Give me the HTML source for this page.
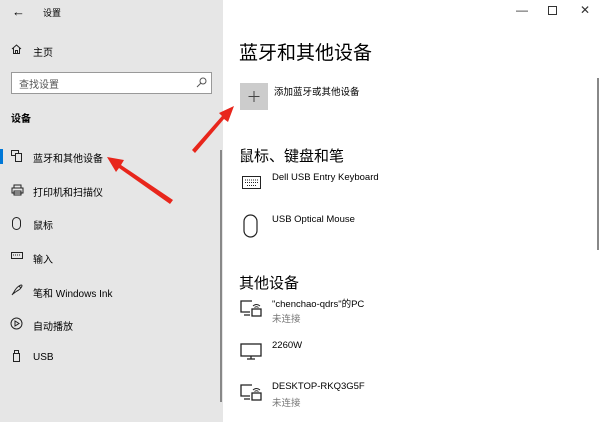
<!DOCTYPE html><html><head><meta charset="utf-8"><style>
*{margin:0;padding:0;box-sizing:border-box}
body{width:600px;height:422px;overflow:hidden;background:#fff;font-family:"Liberation Sans","Noto Sans CJK SC",sans-serif;color:#000;position:relative}
.side{position:absolute;left:0;top:0;width:223px;height:422px;background:#e6e6e6}
.t{position:absolute;white-space:nowrap;font-size:10px}
svg{position:absolute}
.g{color:#777}
</style></head><body>
<div class="side">
<div class="t" style="left:12px;top:4px;font-size:13px">←</div>
<div class="t" style="left:43px;top:6px;font-size:9px">设置</div>
<svg style="left:11px;top:44px" width="11" height="10" viewBox="0 0 11 10"><path d="M1 5L5.5 1L10 5M2.5 4V9.5H8.5V4M4.5 9.5V6.5H6.5V9.5" fill="none" stroke="#222" stroke-width="1"/></svg>
<div class="t" style="left:33px;top:44px">主页</div>
<div style="position:absolute;left:11px;top:72px;width:201px;height:22px;border:1px solid #999;background:#fff"></div>
<div class="t" style="left:19px;top:76px;color:#555">查找设置</div>
<svg style="left:196px;top:77px" width="11" height="11"><circle cx="7" cy="4" r="3" fill="none" stroke="#555"/><path d="M5 6L1 10" stroke="#555"/></svg>
<div class="t" style="left:11px;top:110px;font-weight:bold">设备</div>
<div style="position:absolute;left:0;top:149px;width:3px;height:15px;background:#0078d7"></div>
<svg style="left:11px;top:150px" width="12" height="12"><rect x="0.5" y="0.5" width="7" height="5" fill="none" stroke="#222"/><rect x="4.5" y="3.5" width="6" height="8" fill="#e6e6e6" stroke="#222"/></svg>
<div class="t" style="left:33px;top:150px">蓝牙和其他设备</div>
<svg style="left:11px;top:184px" width="13" height="12"><path d="M3 4V1H10V4M1 4H12V9H1Z M3 7H10V11H3Z" fill="none" stroke="#222"/></svg>
<div class="t" style="left:33px;top:184px">打印机和扫描仪</div>
<svg style="left:12px;top:217px" width="9" height="13"><rect x="0.5" y="0.5" width="8" height="12" rx="4" fill="none" stroke="#222"/></svg>
<div class="t" style="left:33px;top:217px">鼠标</div>
<svg style="left:11px;top:252px" width="12" height="7"><rect x="0.5" y="0.5" width="11" height="6" fill="none" stroke="#222"/><path d="M2 3H10" stroke="#222" stroke-dasharray="1 1"/></svg>
<div class="t" style="left:33px;top:251px">输入</div>
<svg style="left:11px;top:283px" width="12" height="13"><path d="M1 12L3 9Q5 5 8 3Q11 1 11 3Q10 6 6 8Q3 10 2 11M8 3L10 5" fill="none" stroke="#222"/></svg>
<div class="t" style="left:33px;top:285px">笔和 Windows Ink</div>
<svg style="left:10px;top:317px" width="13" height="13"><circle cx="6.5" cy="6.5" r="5.5" fill="none" stroke="#222"/><path d="M5 4V9L9 6.5Z" fill="none" stroke="#222"/></svg>
<div class="t" style="left:33px;top:318px">自动播放</div>
<svg style="left:13px;top:350px" width="7" height="12"><rect x="0.5" y="3.5" width="6" height="8" fill="none" stroke="#222"/><rect x="1.5" y="0.5" width="4" height="3" fill="none" stroke="#222"/></svg>
<div class="t" style="left:33px;top:352px">USB</div>
<div style="position:absolute;left:220px;top:150px;width:2px;height:252px;background:#888"></div>
</div>
<div class="t" style="left:516px;top:3px;font-size:12px;color:#333">—</div>
<svg style="left:548px;top:6px" width="9" height="9"><rect x="0.5" y="0.5" width="8" height="8" fill="none" stroke="#333"/></svg>
<div class="t" style="left:580px;top:3px;font-size:12px;color:#333">✕</div>
<div style="position:absolute;left:597px;top:78px;width:2px;height:172px;background:#888"></div>
<div class="t" style="left:239px;top:38px;font-size:19px">蓝牙和其他设备</div>
<div style="position:absolute;left:240px;top:83px;width:28px;height:27px;background:#ccc"></div>
<svg style="left:240px;top:83px" width="28" height="27"><path d="M14 8V19M8.5 13.5H19.5" stroke="#444" stroke-width="1"/></svg>
<div class="t" style="left:274px;top:84px;font-size:9.5px">添加蓝牙或其他设备</div>
<div class="t" style="left:239px;top:145px;font-size:15px">鼠标、键盘和笔</div>
<svg style="left:242px;top:176px" width="19" height="13"><rect x="0.5" y="0.5" width="18" height="12" fill="none" stroke="#222"/><path d="M3 4H16M3 6.5H16M5 9.5H14" stroke="#222" stroke-dasharray="1 1"/></svg>
<div class="t" style="left:272px;top:172px;font-size:9.5px">Dell USB Entry Keyboard</div>
<svg style="left:243px;top:214px" width="15" height="24"><rect x="1" y="1" width="13" height="22" rx="6.5" fill="none" stroke="#222" stroke-width="1.2"/></svg>
<div class="t" style="left:272px;top:214px;font-size:9.5px">USB Optical Mouse</div>
<div class="t" style="left:239px;top:272px;font-size:15px">其他设备</div>
<svg style="left:240px;top:300px" width="22" height="18"><path d="M12 1H1V12H10M4 15H10" fill="none" stroke="#222" stroke-width="1.3"/><rect x="12" y="9" width="9" height="7" fill="none" stroke="#222" stroke-width="1.3"/><path d="M13 6Q16.5 3 20 6M14.5 7.5Q16.5 6 18.5 7.5" fill="none" stroke="#222"/></svg>
<div class="t" style="left:272px;top:296px;font-size:9.5px">"chenchao-qdrs"的PC</div>
<div class="t g" style="left:272px;top:311px;font-size:9.5px">未连接</div>
<svg style="left:240px;top:343px" width="22" height="17"><rect x="1" y="1" width="20" height="12" fill="none" stroke="#222" stroke-width="1.3"/><path d="M11 13V16M7 16H15" stroke="#222" stroke-width="1.3"/></svg>
<div class="t" style="left:272px;top:340px;font-size:9.5px">2260W</div>
<svg style="left:240px;top:384px" width="22" height="18"><path d="M12 1H1V12H10M4 15H10" fill="none" stroke="#222" stroke-width="1.3"/><rect x="12" y="9" width="9" height="7" fill="none" stroke="#222" stroke-width="1.3"/><path d="M13 6Q16.5 3 20 6M14.5 7.5Q16.5 6 18.5 7.5" fill="none" stroke="#222"/></svg>
<div class="t" style="left:272px;top:381px;font-size:9.5px">DESKTOP-RKQ3G5F</div>
<div class="t g" style="left:272px;top:395px;font-size:9.5px">未连接</div>
<svg style="left:0;top:0" width="600" height="422"><path d="M173 200L121 165L124 160L107 157L116 172L119 168L170 204Z" fill="#e8261c"/><path d="M195 153L224 119L228 122L234 106L219 113L222 116L192 150Z" fill="#e8261c"/></svg>
</body></html>
